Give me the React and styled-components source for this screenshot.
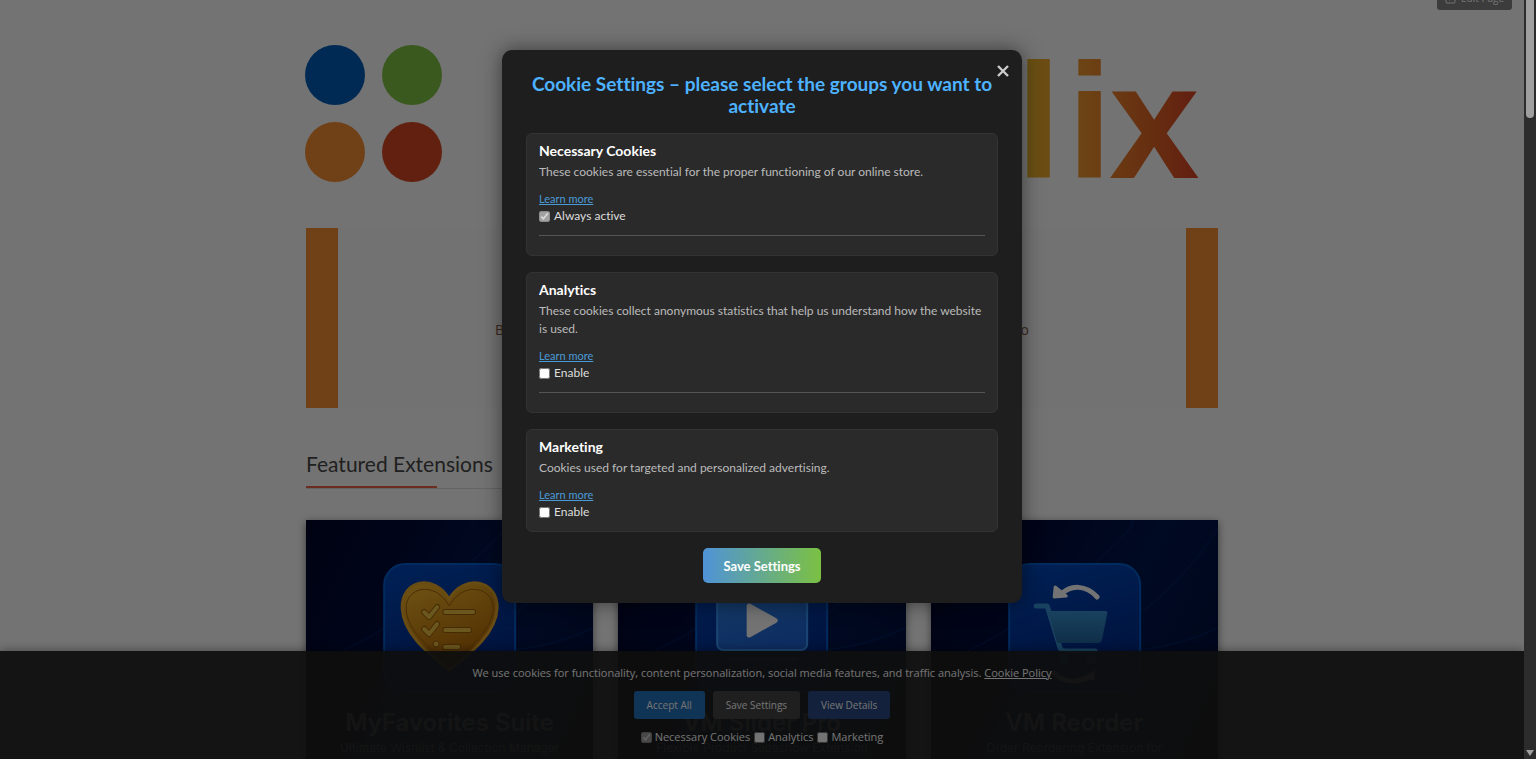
import React from 'react'
import styled, { createGlobalStyle } from 'styled-components';
import { FiEdit } from 'react-icons/fi';

const GlobalStyle = createGlobalStyle`
* {
    box-sizing: border-box;
}
body {
    margin: 0;
    background: #fff;
    font-family: "Open Sans", "Noto Sans", sans-serif;
    overflow: hidden;
}
h2, h3, h4, p {
    margin: 0;
}
`;

const Shell = styled.div`
display: flex;
height: 100vh;
`;
const Page = styled.div`
position: relative;
flex: 1;
min-width: 0;
overflow: hidden;
background: #fff;
`;
const ScrollTrack = styled.div`
display: flex;
flex-direction: column;
justify-content: space-between;
align-items: center;
width: 12px;
background: #2c2c2c;
`;
const ScrollThumb = styled.div`
width: 8px;
height: 118px;
border-radius: 0 0 4px 4px;
background: #9f9f9f;
`;
const ScrollArrow = styled.svg`
width: 8px;
height: 12px;
fill: #9f9f9f;
`;

const Container = styled.div`
width: 100%;
max-width: 912px;
margin: 0 auto;
`;
const EditButton = styled.button`
position: absolute;
top: -14px;
right: 12px;
display: flex;
align-items: center;
gap: 4px;
height: 24px;
padding: 0 8px;
border: 0;
border-radius: 3px;
background: #858585;
color: #fff;
font-family: inherit;
font-size: 10px;
`;
const Logo = styled.svg`
display: block;
width: 100%;
height: 228px;
overflow: visible;
`;
const Hero = styled.section`
display: flex;
align-items: center;
justify-content: center;
height: 180px;
border: solid #f98e33;
border-width: 0 32px;
background: #fcfcfc;
`;
const HeroText = styled.p`
display: flex;
justify-content: space-between;
width: 534px;
padding-top: 22px;
color: #8a5a3c;
font-size: 14px;
`;
const SectionTitle = styled.h2`
width: 50%;
margin-top: 42px;
border-bottom: 1px solid #ddd;
color: #484848;
font-family: Lato, sans-serif;
font-size: 21px;
font-weight: 400;
line-height: 28px;

&:after {
    content: "";
    display: block;
    width: 131px;
    height: 2px;
    margin-top: 8px;
    background: #f0644a;
}
`;
const CardGrid = styled.div`
display: grid;
grid-template-columns: repeat(3, 1fr);
gap: 25px;
margin-top: 31px;
`;
const Card = styled.article`
height: 287px;
background: linear-gradient(115deg, #000628 0%, #000c3c 30%, #00174e 55%, #000c38 100%);
box-shadow: 0 2px 8px rgba(0, 0, 0, 0.5);
color: #fff;
font-family: Inter, sans-serif;
text-align: center;
`;
const CardArt = styled.svg`
display: block;
width: 100%;
height: 186px;
`;
const CardTitle = styled.h3`
font-size: 24px;
font-weight: 600;
line-height: 34px;
`;
const CardText = styled.p`
font-size: 12px;
line-height: 16px;
`;

const Banner = styled.section`
position: absolute;
left: 0;
right: 0;
bottom: 0;
display: flex;
flex-direction: column;
align-items: center;
padding: 12px 16px;
background: rgba(32, 32, 32, 0.94);
box-shadow: 0 -2px 8px rgba(0, 0, 0, 0.3);
color: #fff;
font-size: 11px;
line-height: 20px;

a {
    color: inherit;
}
`;
const BannerButtons = styled.div`
display: flex;
gap: 8px;
margin: 8px 0;
`;
const BannerButton = styled.button`
height: 28px;
padding: 0 13px;
border: 0;
border-radius: 3px;
background: ${({ $bg }) => $bg};
color: #fff;
font-family: inherit;
font-size: 10px;
`;
const BannerChecks = styled.div`
display: flex;
gap: 4px;
`;
const CheckLabel = styled.label`
display: flex;
align-items: center;
gap: 3px;
`;
const Checkbox = styled.input`
width: 11px;
height: 11px;
margin: 0;
`;

const Backdrop = styled.div`
position: absolute;
inset: 0;
display: flex;
align-items: flex-start;
justify-content: center;
padding-top: 50px;
background: rgba(0, 0, 0, 0.55);
`;
const Modal = styled.div`
position: relative;
width: 520px;
padding: 23px 24px 20px;
border-radius: 10px;
background: #1e1e1e;
box-shadow: 0 0 20px rgba(0, 0, 0, 0.5);
color: #ddd;
font-family: Lato, sans-serif;
font-size: 12px;
font-variant-ligatures: none;
`;
const CloseButton = styled.button`
position: absolute;
top: 12px;
right: 10px;
width: 18px;
height: 18px;
padding: 0;
border: 0;
background: none;

svg {
    display: block;
    stroke: #ccc;
    stroke-width: 2.4;
}
`;
const ModalTitle = styled.h2`
color: #4db2ff;
font-size: 19px;
font-weight: 700;
line-height: 22px;
text-align: center;
`;
const Groups = styled.div`
display: flex;
flex-direction: column;
gap: 16px;
margin: 16px 0;
`;
const Group = styled.section`
padding: 8px 12px 10px;
border: 1px solid #333;
border-radius: 6px;
background: #2a2a2a;
`;
const GroupTitle = styled.h4`
color: #fff;
font-size: 14px;
font-weight: 700;
line-height: 18px;
`;
const GroupText = styled.p`
margin: 3px 0 9px;
color: #bbb;
line-height: 18px;
`;
const LearnMore = styled.a`
display: block;
width: fit-content;
color: #4a9ad8;
font-size: 11px;
line-height: 17px;
`;
const GroupCheck = styled(CheckLabel)`
gap: 4px;
line-height: 18px;
`;
const Divider = styled.hr`
height: 1px;
margin: 10px 0 9px;
border: 0;
background: #555;
`;
const SaveButton = styled.button`
display: block;
height: 35px;
margin: 0 auto;
padding: 0 20px;
border: 0;
border-radius: 5px;
background: linear-gradient(90deg, #4f93d8, #7bc143);
color: #fff;
font-family: inherit;
font-size: 13px;
font-weight: 700;
font-variant-ligatures: none;
`;

const groups = [
    {
        title: "Necessary Cookies",
        text: "These cookies are essential for the proper functioning of our online store.",
        label: "Always active",
        locked: true,
    },
    {
        title: "Analytics",
        text: "These cookies collect anonymous statistics that help us understand how the website is used.",
        label: "Enable",
    },
    {
        title: "Marketing",
        text: "Cookies used for targeted and personalized advertising.",
        label: "Enable",
    },
];

const HeartIcon = () => (
    <g>
        <path d="M143 150C120 132 97 113 96 88C95 60 128 53 143 79C158 53 192 60 191 88C190 113 166 132 143 150Z" fill="url(#gold)" stroke="#e8a92a" strokeWidth="3" />
        <path d="M143 144C123 128 101 111 100 89C99 67 129 60 143 86C157 60 188 67 187 89C186 111 163 128 143 144Z" fill="none" stroke="#a5660f" strokeWidth="1" />
        <g fill="none" strokeLinecap="round" strokeLinejoin="round">
            <g stroke="#9b5f0c" strokeWidth="6">
                <path d="M118 92l5 5l8-10M118 109l5 5l8-10M139 92h28M139 110h24M139 127h13" />
            </g>
            <g stroke="#ecc040" strokeWidth="4">
                <path d="M118 92l5 5l8-10M118 109l5 5l8-10M139 92h28M139 110h24M139 127h13" />
            </g>
        </g>
        <circle cx="130" cy="124" r="3" fill="#ecc040" stroke="#9b5f0c" />
    </g>
);

const SliderIcon = () => (
    <g>
        <rect x="99" y="58" width="90" height="72" rx="6" fill="url(#screen)" stroke="#3b9bff" strokeWidth="2" />
        <path d="M131 86v29l26-14.500z" fill="#fff" stroke="#fff" strokeWidth="5" strokeLinejoin="round" />
        <path d="M108 139h72" stroke="#2c85ff" strokeWidth="3" />
    </g>
);

const CartIcon = () => (
    <g>
        <path d="M166 77C155 65 140 64 129 75" fill="none" stroke="#fff" strokeWidth="5" strokeLinecap="round" />
        <path d="M124 67l-1 10l12-1z" fill="#fff" stroke="#fff" strokeWidth="3" strokeLinejoin="round" />
        <path d="M105 86h11l12 39q1 6 6 6h30" fill="none" stroke="#3793d2" strokeWidth="5" strokeLinecap="round" strokeLinejoin="round" />
        <path d="M117 91h57q3 0 2 3l-5 25q-1 4-4 4h-41z" fill="url(#basket)" />
        <circle cx="133" cy="139" r="5" fill="#3b94dc" />
        <circle cx="160" cy="139" r="5" fill="#3b94dc" />
        <path d="M123 153C133 163 148 164 160 155" fill="none" stroke="#fff" strokeWidth="5" strokeLinecap="round" />
        <path d="M164 150l-1 11l-11-3z" fill="#fff" />
    </g>
);

const cards = [
    { title: "MyFavorites Suite", text: "Ultimate Wishlist & Collection Manager", Icon: HeartIcon },
    { title: "VM Slider Pro", text: "Flexible Product Slideshow Extension", Icon: SliderIcon },
    { title: "VM Reorder", text: "Order Reordering Extension for", Icon: CartIcon },
];

const SiteLogo = () => (
    <Logo viewBox="0 0 912 228" role="img" aria-label="lix">
        <defs>
            <linearGradient id="logoText" gradientUnits="userSpaceOnUse" x1="720" y1="0" x2="892" y2="0">
                <stop offset="0" stopColor="#ecb42c" />
                <stop offset="0.350" stopColor="#f0932d" />
                <stop offset="0.750" stopColor="#e26425" />
                <stop offset="1" stopColor="#da4426" />
            </linearGradient>
        </defs>
        <circle cx="29" cy="75" r="30" fill="#005dba" />
        <circle cx="106" cy="75" r="30" fill="#80c644" />
        <circle cx="29" cy="152" r="30" fill="#f98e33" />
        <circle cx="106" cy="152" r="30" fill="#da4a25" />
        <text x="710 761 803" y="178" fontFamily="Liberation Sans, Arial, sans-serif" fontWeight="700" fontSize="163" fill="url(#logoText)">lix</text>
    </Logo>
);

const ProductCard = ({ title, text, Icon }) => (
    <Card>
        <CardArt viewBox="0 0 287 186">
            <defs>
                <linearGradient id="tile" x1="0" y1="0" x2="0.300" y2="1">
                    <stop offset="0" stopColor="#004ac0" />
                    <stop offset="1" stopColor="#002783" />
                </linearGradient>
                <linearGradient id="gold" x1="0" y1="0" x2="0.400" y2="1">
                    <stop offset="0" stopColor="#f5ba2d" />
                    <stop offset="1" stopColor="#b46705" />
                </linearGradient>
                <linearGradient id="screen" x1="0" y1="0" x2="0.300" y2="1">
                    <stop offset="0" stopColor="#2f8be8" />
                    <stop offset="1" stopColor="#2064d6" />
                </linearGradient>
                <linearGradient id="basket" x1="0" y1="0" x2="0" y2="1">
                    <stop offset="0" stopColor="#3793d2" />
                    <stop offset="1" stopColor="#24669f" />
                </linearGradient>
            </defs>
            <path d="M35 132Q90 106 150 55T200 0M200 100Q250 65 287 8M210 130Q250 125 287 108" fill="none" stroke="#0050b8" strokeWidth="1" opacity="0.300" />
            <rect x="78" y="44" width="131" height="128" rx="21" fill="url(#tile)" stroke="#005fd0" strokeWidth="2" />
            <Icon />
        </CardArt>
        <CardTitle>{title}</CardTitle>
        <CardText>{text}</CardText>
    </Card>
);

const CookieBanner = () => (
    <Banner>
        <p>
            We use cookies for functionality, content personalization, social media features, and traffic analysis.{" "}
            <a href="#policy">Cookie Policy</a>
        </p>
        <BannerButtons>
            <BannerButton $bg="#2573bc">Accept All</BannerButton>
            <BannerButton $bg="#464646">Save Settings</BannerButton>
            <BannerButton $bg="#2a4b85">View Details</BannerButton>
        </BannerButtons>
        <BannerChecks>
            <CheckLabel><Checkbox type="checkbox" defaultChecked disabled />Necessary Cookies</CheckLabel>
            <CheckLabel><Checkbox type="checkbox" />Analytics</CheckLabel>
            <CheckLabel><Checkbox type="checkbox" />Marketing</CheckLabel>
        </BannerChecks>
    </Banner>
);

const CookieModal = () => (
    <Backdrop>
        <Modal role="dialog" aria-labelledby="cookie-title">
            <CloseButton aria-label="Close">
                <svg width="18" height="18" viewBox="0 0 18 18" fill="none">
                    <path d="M4 4l10 10M14 4L4 14" />
                </svg>
            </CloseButton>
            <ModalTitle id="cookie-title">Cookie Settings – please select the groups you want to activate</ModalTitle>
            <Groups>
                {groups.map(({ title, text, label, locked }, i) => (
                    <Group key={title}>
                        <GroupTitle>{title}</GroupTitle>
                        <GroupText>{text}</GroupText>
                        <LearnMore href="#learn-more">Learn more</LearnMore>
                        <GroupCheck>
                            <Checkbox type="checkbox" defaultChecked={locked} disabled={locked} />
                            {label}
                        </GroupCheck>
                        {i < groups.length - 1 && <Divider />}
                    </Group>
                ))}
            </Groups>
            <SaveButton>Save Settings</SaveButton>
        </Modal>
    </Backdrop>
);

const App = () => {
    return (
        <Shell>
            <GlobalStyle />
            <Page>
                <Container>
                    <SiteLogo />
                    <Hero>
                        <HeroText><span>B</span><span>o</span></HeroText>
                    </Hero>
                    <SectionTitle>Featured Extensions</SectionTitle>
                    <CardGrid>
                        {cards.map((card) => <ProductCard key={card.title} {...card} />)}
                    </CardGrid>
                </Container>
                <EditButton><FiEdit size={12} />Edit Page</EditButton>
                <CookieBanner />
                <CookieModal />
            </Page>
            <ScrollTrack>
                <ScrollThumb />
                <ScrollArrow viewBox="0 0 8 12"><path d="M0 3h8L4 9z" /></ScrollArrow>
            </ScrollTrack>
        </Shell>
    )
}

export default App
